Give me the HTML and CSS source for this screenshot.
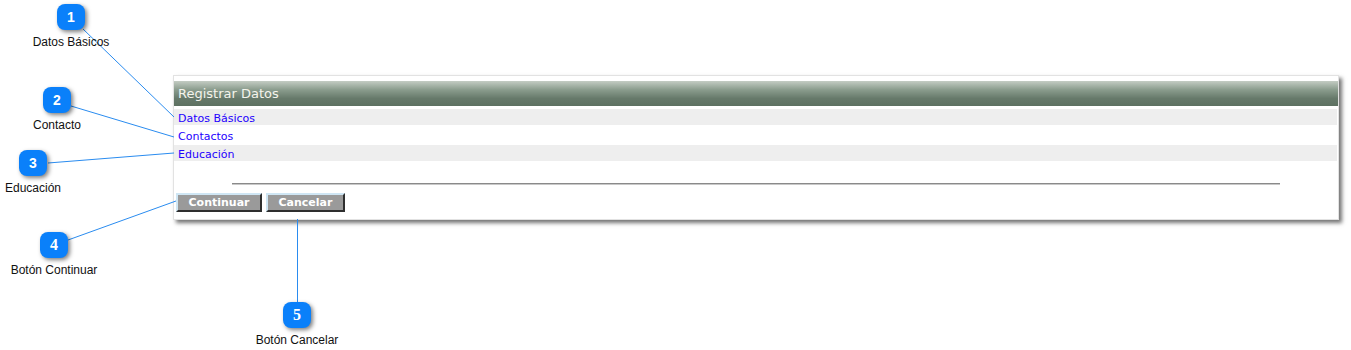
FILE: index.html
```html
<!DOCTYPE html>
<html lang="es">
<head>
<meta charset="utf-8">
<title>Registrar Datos</title>
<link rel="stylesheet" href="styles.css">
</head>
<body>
<div class="canvas">
  <div class="stage">
    <div class="panel">
      <div class="panel-head">Registrar Datos</div>
      <ul class="rows">
        <li class="row alt"><a href="#">Datos Básicos</a></li>
        <li class="row"><a href="#">Contactos</a></li>
        <li class="row alt"><a href="#">Educación</a></li>
      </ul>
      <div class="rule"></div>
      <div class="actions">
        <button class="btn">Continuar</button>
        <button class="btn">Cancelar</button>
      </div>
    </div>
  </div>

  <svg class="leaders" width="1351" height="350" viewBox="0 0 1351 350">
    <line x1="83" y1="29" x2="174" y2="117"/>
    <line x1="71" y1="106" x2="174" y2="137"/>
    <line x1="48" y1="163" x2="174" y2="153"/>
    <line x1="68" y1="240" x2="176" y2="201"/>
    <line x1="297.5" y1="219" x2="297.5" y2="302"/>
  </svg>

  <div class="callout c1"><span class="badge">1</span><span class="label">Datos Básicos</span></div>
  <div class="callout c2"><span class="badge">2</span><span class="label">Contacto</span></div>
  <div class="callout c3"><span class="badge">3</span><span class="label">Educación</span></div>
  <div class="callout c4"><span class="badge serif">4</span><span class="label">Botón Continuar</span></div>
  <div class="callout c5"><span class="badge serif">5</span><span class="label">Botón Cancelar</span></div>
</div>
</body>
</html>
```

FILE: styles.css
```css
html, body {
  margin: 0;
  padding: 0;
  background: #ffffff;
}

.canvas {
  position: relative;
  width: 1351px;
  height: 350px;
  overflow: hidden;
  font-family: "Liberation Sans", Arial, sans-serif;
}

.stage {
  padding: 75px 0 0 173px;
}

.panel {
  box-sizing: border-box;
  width: 1166px;
  background: #ffffff;
  border: 1px solid #e2e2e2;
  box-shadow: 3px 3px 4px rgba(0, 0, 0, 0.55);
  padding: 5px 0 7px 0;
  font-family: "DejaVu Sans", Verdana, sans-serif;
}

.panel-head {
  height: 25px;
  line-height: 25px;
  padding-left: 4px;
  font-size: 13px;
  color: #f4f4ec;
  background: linear-gradient(#c3ccc3 0%, #8a9c8d 35%, #66796a 70%, #5d7161 100%);
}

.rows {
  list-style: none;
  margin: 3px 1px 0 0;
  padding: 0;
  display: flex;
  flex-direction: column;
  gap: 2px;
}

.row {
  box-sizing: border-box;
  height: 16px;
  padding: 2px 0 0 4px;
  line-height: 15px;
  font-size: 11px;
  overflow: hidden;
}

.row.alt {
  background: #eeeeee;
}

.row a {
  color: #2400ff;
  text-decoration: none;
}

.rule {
  height: 0;
  margin: 22px 58px 0 58px;
  border-top: 1px solid #8a8a8a;
  border-bottom: 1px solid #c8c8c8;
}

.actions {
  display: flex;
  gap: 4px;
  margin: 8px 0 0 2px;
}

.btn {
  box-sizing: border-box;
  height: 19px;
  padding: 0 10.5px;
  margin: 0;
  font-family: "DejaVu Sans", Verdana, sans-serif;
  font-weight: bold;
  font-size: 11px;
  line-height: 15px;
  color: #ffffff;
  background: #9a9a9a;
  border-style: solid;
  border-width: 2px;
  border-color: #cfe6f4 #2e2e2e #2e2e2e #cfe6f4;
}

.leaders {
  position: absolute;
  left: 0;
  top: 0;
  pointer-events: none;
}

.leaders line {
  stroke: #2a8cf0;
  stroke-width: 1;
}

.callout {
  position: absolute;
  width: 120px;
  display: flex;
  flex-direction: column;
  align-items: center;
  gap: 5px;
}

.c1 { left: 11px; top: 4px; }
.c2 { left: -3px; top: 87px; }
.c3 { left: -27px; top: 150px; }
.c4 { left: -6px; top: 232px; }
.c5 { left: 237px; top: 302px; }

.badge {
  width: 28px;
  height: 26px;
  border-radius: 8px;
  background: #0a80fa;
  color: #ffffff;
  font-family: "Liberation Sans", Arial, sans-serif;
  font-weight: bold;
  font-size: 14px;
  line-height: 26px;
  text-align: center;
  box-shadow: 2px 2px 4px rgba(0, 0, 0, 0.5);
}

.badge.serif {
  font-family: "Liberation Serif", "Times New Roman", serif;
  font-size: 16px;
}

.label {
  font-size: 12px;
  line-height: 14px;
  color: #111111;
  white-space: nowrap;
}
```
